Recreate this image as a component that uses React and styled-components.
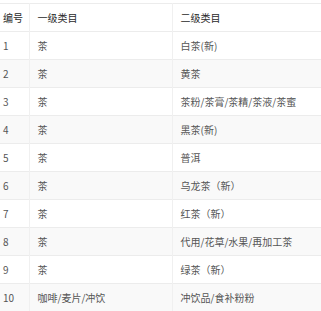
import styled, { createGlobalStyle } from 'styled-components';

const GlobalStyle = createGlobalStyle`
    body {
        margin: 0;
        background: #ffffff;
        font-family: "Noto Sans CJK SC", "Noto Sans", sans-serif;
    }
`;

const Page = styled.div`
    width: 321px;
    height: 311px;
    padding-top: 3px;
    box-sizing: border-box;
    overflow: hidden;
`;

const Table = styled.table`
    width: 321px;
    border-collapse: collapse;
    table-layout: fixed;
    font-size: 10px;
    border-top: 1px solid #ececec;
`;

const Col = styled.col`
    width: ${p => p.$w}px;
`;

const Row = styled.tr`
    height: 28px;
    background: ${p => (p.$striped ? '#f9f9f9' : '#ffffff')};
    border-bottom: 1px solid #ececec;
`;

const HeadCell = styled.th`
    padding: 0 0 0 ${p => p.$pad}px;
    text-align: left;
    font-weight: 400;
    color: #2a2a2a;
    border-left: ${p => (p.$first ? 'none' : '1px solid #f0f0f0')};
    white-space: nowrap;
`;

const Cell = styled.td`
    padding: 0 0 0 ${p => p.$pad}px;
    color: #555;
    border-left: ${p => (p.$first ? 'none' : '1px solid #f0f0f0')};
    white-space: nowrap;
    overflow: hidden;
`;

const rows = [
    { id: 1, first: '茶', second: '白茶(新)' },
    { id: 2, first: '茶', second: '黄茶' },
    { id: 3, first: '茶', second: '茶粉/茶膏/茶精/茶液/茶蜜' },
    { id: 4, first: '茶', second: '黑茶(新)' },
    { id: 5, first: '茶', second: '普洱' },
    { id: 6, first: '茶', second: '乌龙茶（新）' },
    { id: 7, first: '茶', second: '红茶（新）' },
    { id: 8, first: '茶', second: '代用/花草/水果/再加工茶' },
    { id: 9, first: '茶', second: '绿茶（新）' },
    { id: 10, first: '咖啡/麦片/冲饮', second: '冲饮品/食补粉粉' },
];

export default function App() {
    return (
        <Page>
            <GlobalStyle />
            <Table>
                <colgroup>
                    <Col $w={29} />
                    <Col $w={143} />
                    <Col $w={149} />
                </colgroup>
                <thead>
                    <Row>
                        <HeadCell $pad={3} $first>编号</HeadCell>
                        <HeadCell $pad={8}>一级类目</HeadCell>
                        <HeadCell $pad={8}>二级类目</HeadCell>
                    </Row>
                </thead>
                <tbody>
                    {rows.map(row => (
                        <Row key={row.id} $striped={row.id % 2 === 0}>
                            <Cell $pad={3} $first>{row.id}</Cell>
                            <Cell $pad={8}>{row.first}</Cell>
                            <Cell $pad={8}>{row.second}</Cell>
                        </Row>
                    ))}
                </tbody>
            </Table>
        </Page>
    );
}
